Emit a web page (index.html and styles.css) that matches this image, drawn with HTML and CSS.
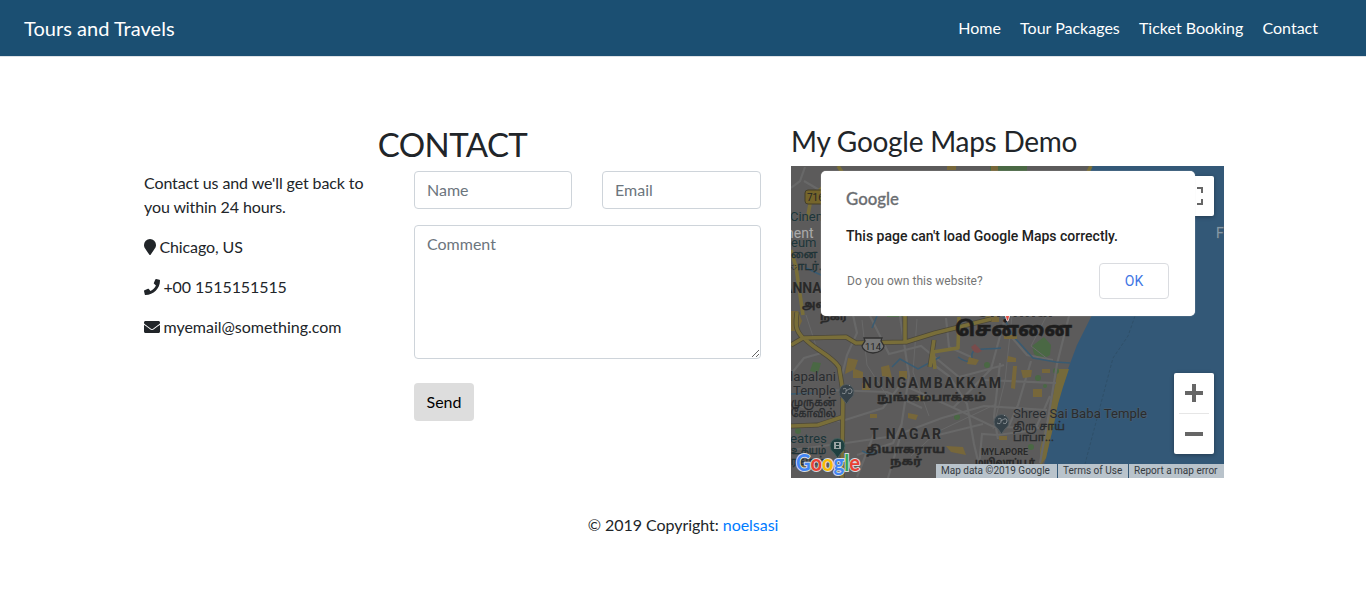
FILE: index.html
```html
<!DOCTYPE html>
<html lang="en">
<head>
<meta charset="utf-8">
<title>Tours and Travels</title>
<link rel="stylesheet" href="styles.css">
</head>
<body>
<nav class="navbar">
  <a class="brand">Tours and Travels</a>
  <div class="links"><a>Home</a><a>Tour Packages</a><a>Ticket Booking</a><a>Contact</a></div>
</nav>
<main class="page">
  <section class="contact">
    <h2>CONTACT</h2>
    <div class="contact-row">
      <div class="info">
        <p>Contact us and we'll get back to you within 24 hours.</p>
        <p><svg class="pin" viewBox="0 0 384 512"><path d="M172 502C27 291 0 270 0 192a192 192 0 0 1 384 0c0 78-27 99-172 310-10 13-30 13-40 0z"/></svg> Chicago, US</p>
        <p><svg class="ico" viewBox="0 0 512 512"><path d="M493 25 389 1c-11-3-23 3-27 14l-48 112c-4 10-1 21 7 28l61 50c-36 76-99 140-177 177l-50-61c-7-8-18-11-28-7L15 362C4 366-2 378 1 389l24 104c3 11 12 19 24 19 256 0 463-207 463-463 0-12-8-22-19-24z"/></svg> +00 1515151515</p>
        <p><svg class="ico" viewBox="0 0 512 512"><path d="M502 191c4-3 10 0 10 5v204c0 27-21 48-48 48H48c-27 0-48-21-48-48V196c0-5 6-8 10-5 22 17 52 40 155 114 21 15 57 48 91 48 34 0 71-33 91-48 103-75 133-97 155-114zM256 320c23 0 57-29 74-42 133-96 143-104 173-128 6-5 9-12 9-19v-19c0-27-21-48-48-48H48c-27 0-48 21-48 48v19c0 7 3 14 9 19 30 24 40 32 173 128 17 13 51 42 74 42z"/></svg> myemail@something.com</p>
      </div>
      <form class="form">
        <div class="fields"><input class="control" placeholder="Name"><input class="control" placeholder="Email"></div>
        <textarea class="control comment" placeholder="Comment" rows="5"></textarea>
        <button class="send" type="button">Send</button>
      </form>
    </div>
  </section>
  <section class="map-section">
    <h3>My Google Maps Demo</h3>
    <div class="map">
      <svg class="map-canvas" viewBox="791 166 433 312">
        <rect x="791" y="166" width="433" height="312" fill="#5c5b5b"/>
        <path fill="#335877" d="M1090 166H1224V478H1040L1046 458 1052 432 1059 396 1068 369 1077 345 1092 315 1080 240Z"/>
        <path fill="#756a3b" d="M1058 369H1069L1063 387 1058 404 1054 424 1050 440 1046 458 1040 466 1040 449 1047 421 1052 401Z"/>
        <g fill="#4a6844"><path d="M990 166H1058V173H990ZM1032 346l12-9 7 8-1 10-9 5-7-6zM813 362l8 1-3 10-8-2z"/><circle cx="1038" cy="378" r="3"/><circle cx="987" cy="365" r="3"/><circle cx="1056" cy="371" r="3"/><circle cx="1045" cy="386" r="2"/><circle cx="957" cy="417" r="3"/><circle cx="1031" cy="447" r="3"/><circle cx="798" cy="431" r="3"/><path d="M887 314h17v3h-17z"/></g>
        <path fill="#5c5b5b" d="M1027 166h31v8h-31z"/>
        <g fill="none" stroke="#686868" stroke-width="2.2">
          <path d="M791 188 800 181 805 167M804 181l17 10M791 450l55-7 48-7 48-18 42-12 63 4M853 315l4 18-10 22-5 20M845 420l38-12 18-24 53 24 40 19 50 1M870 316l19 38 32-8 38 31 45-12M900 316l9 60-10 65-11 37M934 365l15 11 18 28 7 40 8 34M953 408l38-39 14-51M791 374l13-16 21-6M984 380l72 3M1002 326l25 29 26 5M1069 316l-12 48-9 55-8 44M978 478l4-44 15 1 38-5 15-34M1000 363l-6 54 4 22M1031 361l-13 44-10 23M934 436l49-12M829 390l58 2 35 16M857 455l36-12 9-20M946 318l3 29 22 10M857 477l17-43"/>
          <path stroke-width="1" d="M806 315l12 37M862 320l5 45 20 31M917 319l-4 53 16 44M1012 316l-7 65-12 48M791 403l54 21M911 456l26-24 59-28M1046 317l-15 29 18 14"/>
        </g>
        <g fill="none" stroke="#395b72" stroke-width="1.5"><path d="M1003 316l11 21 19 21 23 4 14 1M958 357q13 9 14 0c-2-11 14-7 29-9M892 367l8-8 18 10 22-12M791 394l23-1M862 451q9 5 16 1M877 316l-5 12M806 268l15 7"/></g>
        <g fill="#77673a"><path d="M791 311h7l4 10-5 10h-6zM848 358l10 2-3 9 8 3v6h-10v-8l-8 4zM881 367l8-2 3 13-10-2zM969 357l10 3-3 5-9-1zM1013 366h4l-2 23-4-1zM1021 370h11l-1 7-8 1zM946 446l17 1 3 8-15-3zM870 414h7v4h-7zM899 371h8v8h-8zM1008 356l8 2v4h-9zM1004 335h13v4h-13zM985 316h14v6h-14zM999 436h8v4h-8zM1033 389h9v8h-9zM1042 369h8v4h-8zM862 383h8v7h-8zM917 396h7v5h-7zM908 413l10 2-2 5-8-2zM801 463h6v7h-6zM991 166h7v5h-7zM947 166h9v4h-9z"/></g>
        <path fill="#794c4c" d="M971 347l4-3 7 7-4 2-4-1z"/>
        <g fill="none" stroke="#4b4739" stroke-width="5" stroke-linejoin="round"><path d="M803 338c-9-9-7-16-6-26M791 345l12-7 43-1 10 6 50-1 29-9 56-14M804 338c12 13 26 16 35 29l4 25-1 86M791 426l27-1 24-8M905 316v25M934 340l-4 27"/></g>
        <g fill="none" stroke="#796e39" stroke-width="3.600" stroke-linejoin="round"><path d="M803 338c-9-9-7-16-6-26M791 345l12-7 43-1 10 6 50-1 29-9 56-14M804 338c12 13 26 16 35 29l4 25-1 86M791 426l27-1 24-8M905 316v25M934 340l-4 27M807 220l4-21 12-12M791 250l5 17 7 48M959 317l-1 31-25 4 2 17M1091 166l-3 6M838 166l4 6"/></g>
        <path fill="none" stroke="#2d4c65" stroke-width=".8" stroke-dasharray="3 2" d="M1135 316l-7 20-15 22-13 49-15 57"/>
        <rect x="805" y="190" width="23" height="14" rx="3" fill="#75652b" stroke="#453f29"/>
        <text x="807" y="201" font-size="10" fill="#242424">716</text>
        <path fill="#777" stroke="#303030" stroke-width="1.3" d="M864 338h18l-1 3 3 5q-1 6-11 7-10-1-11-7l3-5z"/><text x="865" y="350" font-size="9.5" fill="#222">114</text>
        <g class="labels">
          <g fill="#1c3539" font-size="13"><text x="790" y="221">Cinema</text><text x="791" y="247">eum</text><text class="tamil" x="791" y="258">னை</text><text class="tamil" x="791" y="270">ாடர்…</text></g>
          <text x="786" y="238" font-size="14" fill="#aaa">nent</text><text x="1216" y="238" font-size="14" fill="#8299aa">F</text>
          <g class="district"><text x="783" y="293">ANNA NA</text><text class="tamil" x="802" y="308">அண்ணா</text><text class="tamil" x="820" y="320">நகர்</text><text x="862" y="388" textLength="139">NUNGAMBAKKAM</text><text class="tamil" x="877" y="401" textLength="109" lengthAdjust="spacingAndGlyphs">நுங்கம்பாக்கம்</text><text x="870" y="439" textLength="71">T NAGAR</text><text class="tamil" x="866" y="453" textLength="79" lengthAdjust="spacingAndGlyphs">தியாகராய</text><text class="tamil" x="890" y="465" textLength="32" lengthAdjust="spacingAndGlyphs">நகர்</text><text x="981" y="455" font-size="9" textLength="47">MYLAPORE</text><text class="tamil small" x="975" y="466" textLength="60" lengthAdjust="spacingAndGlyphs">மயிலாப்பூர்</text></g>
          <text x="976" y="317" font-size="20" font-weight="700" fill="#252525" textLength="77">Chennai</text>
          <text class="tamil city" x="955" y="336" textLength="117" lengthAdjust="spacingAndGlyphs">சென்னை</text>
          <g fill="#292c2f" font-size="13"><text x="790" y="381" textLength="46" lengthAdjust="spacingAndGlyphs">lapalani</text><text x="793" y="395" textLength="43" lengthAdjust="spacingAndGlyphs">Temple</text><text class="tamil" x="791" y="406" textLength="45" lengthAdjust="spacingAndGlyphs">முருகன்</text><text class="tamil" x="791" y="417" textLength="45" lengthAdjust="spacingAndGlyphs">கோவில்</text><text x="1013" y="418" textLength="134" lengthAdjust="spacingAndGlyphs">Shree Sai Baba Temple</text><text class="tamil" x="1013" y="430" textLength="52" lengthAdjust="spacingAndGlyphs">திரு சாய்</text><text class="tamil" x="1013" y="441" textLength="41" lengthAdjust="spacingAndGlyphs">பாபா...</text></g>
          <g fill="#1c3539" font-size="13"><text x="790" y="443" textLength="37" lengthAdjust="spacingAndGlyphs">eatres</text><text class="tamil" x="791" y="454" textLength="35" lengthAdjust="spacingAndGlyphs">உதயம்</text><text class="tamil" x="791" y="465" textLength="34" lengthAdjust="spacingAndGlyphs">ரங்கம்</text></g>
        </g>
        <path fill="#354148" stroke="#555d61" d="M839 392a7.500 7.500 0 1 1 15 0q0 4-4 7l-3.500 5-3.500-5q-4-3-4-7z"/><path fill="#354148" stroke="#555d61" d="M994 422a7.500 7.500 0 1 1 15 0q0 4-4 7l-3.500 5-3.500-5q-4-3-4-7z"/>
        <g fill="none" stroke="#878e92" stroke-width="1"><path d="M843 389q4-2 3 2 0 4-4 2m4-2q5-4 6-1 0 5-4 3m1-8 1 1M998 419q4-2 3 2 0 4-4 2m4-2q5-4 6-1 0 5-4 3m1-8 1 1"/></g>
        <path fill="#1f4040" stroke="#48605e" d="M830 446a7.500 7.500 0 1 1 15 0q0 4-4 7l-3.500 5-3.500-5q-4-3-4-7z"/><path fill="#9ba5a5" fill-rule="evenodd" d="M834 442h7v7h-7zM836 443v2h3v-2zM836 446v2h3v-2z"/>
        <path fill="#e64a40" stroke="#eee" stroke-width=".8" d="M1005 315h5l-2 6h-1z"/>
        <text class="map-logo" x="796" y="471" textLength="64" lengthAdjust="spacingAndGlyphs"><tspan fill="#4285f4">G</tspan><tspan fill="#e94235">o</tspan><tspan fill="#fabb05">o</tspan><tspan fill="#4285f4">g</tspan><tspan fill="#34a853">l</tspan><tspan fill="#e94235">e</tspan></text>
      </svg>
      <div class="fullscreen"><svg viewBox="0 0 18 18"><path fill="none" stroke="#666" stroke-width="2" d="M1 6V1h5M12 1h5v5M17 12v5h-5M6 17H1v-5"/></svg></div>
      <div class="zoom"><span class="plus"></span><span class="divider"></span><span class="minus"></span></div>
      <div class="legal"><span>Map data ©2019 Google</span><span>Terms of Use</span><span>Report a map error</span></div>
      <div class="dialog">
        <svg class="dialog-logo" viewBox="0 0 54 22"><text x="0" y="17" textLength="53" lengthAdjust="spacingAndGlyphs">Google</text></svg>
        <p class="message">This page can't load Google Maps correctly.</p>
        <div class="dialog-actions"><a>Do you own this website?</a><button type="button">OK</button></div>
      </div>
    </div>
  </section>
</main>
<footer>© 2019 Copyright: <a>noelsasi</a></footer>
</body>
</html>
```
FILE: styles.css
```css
* { box-sizing: border-box; }
body { margin: 0; font: 400 16px/24px Lato, sans-serif; color: #212529; background: #fff; }
.navbar { display: flex; justify-content: space-between; align-items: center; height: 57px; padding: 0 48px 0 24px; background: #1b4f72; border-bottom: 1px solid #dee2e6; color: #fff; }
.brand { font-size: 20px; line-height: 30px; letter-spacing: .03px; }
.links { display: flex; gap: 19.2px; }
.page { display: grid; grid-template-columns: 617px 433px; column-gap: 30px; padding: 67px 0 0 144px; }
h2, h3 { margin: 0; font-weight: 400; }
h2 { font-size: 33px; line-height: 40px; letter-spacing: -.6px; text-align: center; }
h3 { font-size: 28px; line-height: 34px; letter-spacing: -.25px; padding-bottom: 8px; }
.contact-row { display: grid; grid-template-columns: 240px 347px; column-gap: 30px; padding-top: 7px; }
.info { letter-spacing: -.1px; }
.info p { margin: 0 0 16px; }
.info p:last-child { letter-spacing: -.02px; }
.pin, .ico { height: 16px; width: 16px; margin-right: -.6px; vertical-align: -2px; fill: #212529; }
.pin { width: 12px; }
.fields { display: grid; grid-template-columns: 158px 159px; gap: 30px; margin-bottom: 16px; }
.control { display: block; width: 100%; height: 38px; margin: 0; padding: 6px 12px; border: 1px solid #ced4da; border-radius: 4px; font: inherit; color: #495057; background: #fff; }
.fields .control { padding: 5px 12px 7px; }
.control::placeholder { color: #6c757d; }
.comment { height: 134px; resize: vertical; }
.send { display: block; width: 60px; height: 38px; margin: 24px 0 0; padding: 0; border: 0; border-radius: 4px; background: #ddd; color: #000; font: inherit; }
.map { position: relative; height: 312px; overflow: hidden; font-family: Roboto, sans-serif; }
.map-canvas { display: block; width: 433px; height: 312px; }
.labels { font-size: 12px; paint-order: stroke; stroke: #64646488; stroke-width: 1px; }
.tamil { font-size: 11px; font-family: Roboto, "Noto Sans Tamil", "Noto Sans", sans-serif; stroke: #292929; stroke-width: .35px; }
.tamil.small { font-size: 10px; }
.tamil.city { font-size: 20px; font-weight: 700; fill: #1d1d1d; stroke-width: .7px; }
.district { font-size: 14px; font-weight: 700; fill: #292929; }
.map-logo { font: 700 22px Lato, sans-serif; paint-order: stroke; stroke: #d7dce0; stroke-width: 2px; }
.fullscreen { position: absolute; top: 10px; right: 10px; width: 40px; height: 40px; display: grid; place-items: center; background: #fff; border-radius: 2px; box-shadow: 0 1px 4px #0005; }
.fullscreen svg { width: 18px; }
.zoom { position: absolute; right: 10px; top: 207px; width: 40px; height: 81px; display: grid; grid-template-rows: 40px 1px 40px; place-items: center; background: #fff; border-radius: 2px; box-shadow: 0 1px 4px #0005; }
.plus { width: 18px; height: 18px; background: linear-gradient(#666, #666) center/18px 4px no-repeat, linear-gradient(#666, #666) center/4px 18px no-repeat; }
.divider { width: 30px; height: 1px; background: #e6e6e6; }
.minus { width: 18px; height: 4px; background: #666; }
.legal { position: absolute; right: 0; bottom: 0; display: grid; grid-template-columns: 121px 70px 95px; gap: 1px; font-size: 10px; line-height: 14px; color: #353a40; }
.legal span { height: 14px; padding: 0 5px; background: #b9c3cb; white-space: nowrap; }
.dialog { position: absolute; left: 30px; top: 5px; width: 374px; height: 145px; padding: 17px 26px 0 25px; background: #fff; border-radius: 5px; box-shadow: 0 0 1px #ddd; }
.dialog-logo { display: block; width: 54px; height: 22px; overflow: visible; font: 500 18px Lato, sans-serif; fill: #6b6e72; stroke: #6b6e72; stroke-width: .3px; }
.message { margin: 16px 0 17px; font-size: 14px; line-height: 20px; font-weight: 500; color: #212121; white-space: nowrap; }
.dialog-actions { display: flex; align-items: center; justify-content: space-between; padding-left: 1px; font-size: 12px; line-height: 16px; letter-spacing: .03px; color: #757575; }
.dialog-actions button { width: 70px; height: 36px; border: 1px solid #dadce0; border-radius: 4px; background: #fff; color: #4176e4; font: 400 14px Roboto, sans-serif; }
footer { padding-top: 35px; text-align: center; letter-spacing: -.04px; }
footer a { color: #007bff; }
```
